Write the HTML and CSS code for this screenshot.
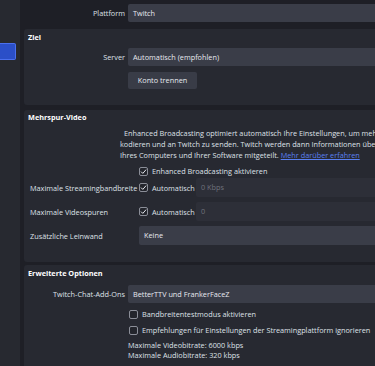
FILE: index.html
```html
<!DOCTYPE html>
<html lang="de">
<head>
<meta charset="utf-8">
<title>Stream</title>
<link rel="stylesheet" href="styles.css">
</head>
<body>
<div class="app">
  <div class="sidebar">
    <div class="nav-item"></div>
  </div>
  <div class="content">
    <div class="top">
      <div class="row">
        <div class="label">Plattform</div>
        <div class="field input">Twitch</div>
      </div>
    </div>

    <div class="group g-ziel">
      <div class="group-title">Ziel</div>
      <div class="row r-server">
        <div class="label">Server</div>
        <div class="field input">Automatisch (empfohlen)</div>
      </div>
      <div class="row r-button">
        <div class="label"></div>
        <div class="button">Konto trennen</div>
      </div>
    </div>

    <div class="group g-multi">
      <div class="group-title">Mehrspur-Video</div>
      <p class="desc"><span class="l1">Enhanced Broadcasting optimiert automatisch Ihre Einstellungen, um mehr</span><br>kodieren und an Twitch zu senden. Twitch werden dann Informationen über<br>Ihres Computers und Ihrer Software mitgeteilt. <a class="link" href="#">Mehr darüber erfahren</a></p>
      <div class="mrow r-enh">
        <div class="mlabel"></div>
        <label class="check"><span class="box checked"><svg viewBox="0 0 9 9" width="9" height="9"><path d="M2 4.6 L3.8 6.4 L7.1 2.6" fill="none" stroke="#e6e8ee" stroke-width="1"/></svg></span>Enhanced Broadcasting aktivieren</label>
      </div>
      <div class="mrow r-in">
        <div class="mlabel">Maximale Streamingbandbreite</div>
        <label class="check auto"><span class="box checked"><svg viewBox="0 0 9 9" width="9" height="9"><path d="M2 4.6 L3.8 6.4 L7.1 2.6" fill="none" stroke="#e6e8ee" stroke-width="1"/></svg></span>Automatisch</label>
        <div class="field dis">0 Kbps</div>
      </div>
      <div class="mrow r-in2">
        <div class="mlabel">Maximale Videospuren</div>
        <label class="check auto"><span class="box checked"><svg viewBox="0 0 9 9" width="9" height="9"><path d="M2 4.6 L3.8 6.4 L7.1 2.6" fill="none" stroke="#e6e8ee" stroke-width="1"/></svg></span>Automatisch</label>
        <div class="field dis">0</div>
      </div>
      <div class="mrow r-sel">
        <div class="mlabel">Zusätzliche Leinwand</div>
        <div class="field input sel">Keine</div>
      </div>
    </div>

    <div class="group g-adv">
      <div class="group-title">Erweiterte Optionen</div>
      <div class="row r-chat">
        <div class="label">Twitch-Chat-Add-Ons</div>
        <div class="field input">BetterTTV und FrankerFaceZ</div>
      </div>
      <div class="row r-c1">
        <div class="label"></div>
        <label class="check"><span class="box"></span>Bandbreitentestmodus aktivieren</label>
      </div>
      <div class="row r-c2">
        <div class="label"></div>
        <label class="check"><span class="box"></span>Empfehlungen für Einstellungen der Streamingplattform ignorieren</label>
      </div>
      <div class="info">
        <div>Maximale Videobitrate: 6000 kbps</div>
        <div>Maximale Audiobitrate: 320 kbps</div>
      </div>
    </div>
  </div>
</div>
</body>
</html>
```

FILE: styles.css
```css
* { box-sizing: border-box; }
html, body { margin: 0; padding: 0; }
body {
  width: 375px;
  height: 366px;
  overflow: hidden;
  background: #1e1f26;
  font-family: "Open Sans", "Noto Sans", sans-serif;
  font-size: 7.3px;
  color: #dfe1e8;
}
.app { display: flex; height: 366px; }
.sidebar {
  width: 20px;
  flex: none;
  background: #272930;
  padding-top: 43px;
}
.nav-item {
  width: 16px;
  height: 17px;
  background: #2b4fc8;
  border: 1px solid #4b70ee;
  border-left: none;
  border-radius: 0 2px 2px 0;
}
.content {
  flex: none;
  width: 560px;
  padding-left: 4px;
}
.top { height: 29px; padding-top: 4px; }
.row { display: flex; align-items: center; }
.label {
  width: 104px;
  flex: none;
  padding-right: 3px;
  text-align: right;
  white-space: nowrap;
}
.field {
  flex: 1;
  height: 18px;
  line-height: 18px;
  padding-left: 5px;
  white-space: nowrap;
  border-radius: 2px;
}
.input { background: #3a3d48; color: #e8eaf0; }
.group {
  background: #272931;
  border-radius: 3px;
}
.group-title {
  height: 11px;
  line-height: 11px;
  padding-left: 4px;
  font-weight: 700;
  color: #ffffff;
}
.g-ziel { padding: 3px 0 16px 0; margin-bottom: 5px; }
.r-server { margin-top: 5px; }
.r-button { margin-top: 6px; }
.button {
  height: 17px;
  line-height: 17px;
  width: 69px;
  text-align: center;
  background: #393c47;
  border-radius: 2px;
  color: #e8eaf0;
}
.g-multi { padding: 2px 0 17px 0; margin-bottom: 3px; }
.desc {
  margin: 5px 0 0 96px;
  line-height: 11px;
  white-space: nowrap;
}
.l1 { padding-left: 4px; }
.link { color: #5a80f0; text-decoration: underline; }
.mrow { display: flex; align-items: center; padding-left: 6px; }
.mlabel { width: 109px; flex: none; white-space: nowrap; }
.r-enh { margin-top: 3px; height: 14px; }
.r-in { margin-top: 0; height: 19px; }
.r-in2 { margin-top: 5px; height: 19px; }
.r-sel { margin-top: 5px; height: 19px; }
.r-in .field, .r-in2 .field, .r-sel .field { height: 19px; line-height: 19px; }
.dis { background: #2d2f38; color: #6f727c; }
.sel { padding-left: 5px; }
.check {
  display: flex;
  align-items: center;
  white-space: nowrap;
}
.check.auto { width: 57px; flex: none; }
.box {
  width: 9px;
  height: 9px;
  flex: none;
  margin-right: 4px;
  border: 1px solid #8b8e98;
  border-radius: 2px;
  background: #23252c;
  position: relative;
}
.box svg { position: absolute; left: -1px; top: -1px; }
.g-adv { padding: 3px 0 20px 0; }
.r-chat { margin-top: 6px; }
.r-c1 { margin-top: 4px; height: 14px; }
.r-c2 { margin-top: 2px; height: 14px; }
.r-c1 .label, .r-c2 .label { width: 105px; }
.info { margin: 3px 0 0 104px; line-height: 10px; }
```
